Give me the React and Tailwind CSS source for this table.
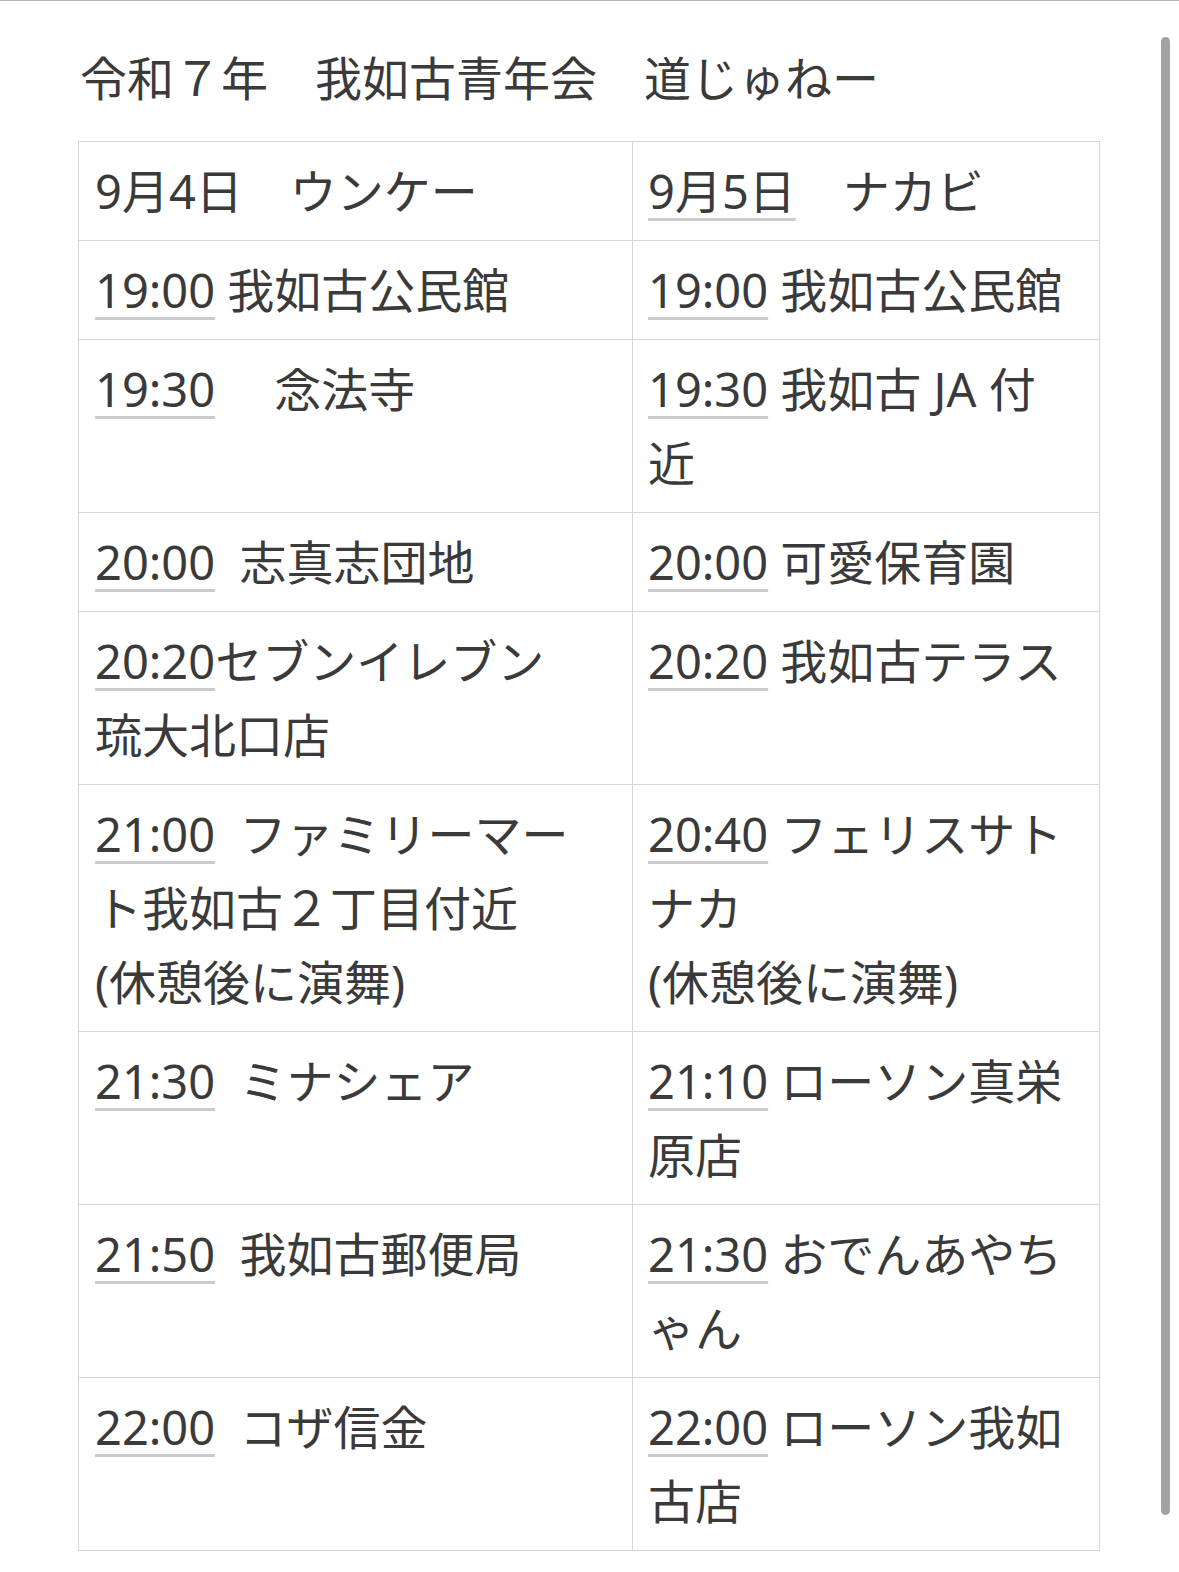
import React from "react";

const rows = [
  [
    { time: "19:00", lines: [" 我如古公民館"] },
    { time: "19:00", lines: [" 我如古公民館"] },
  ],
  [
    { time: "19:30", lines: ["　 念法寺"] },
    { time: "19:30", lines: [" 我如古 JA 付", "近"] },
  ],
  [
    { time: "20:00", lines: ["  志真志団地"] },
    { time: "20:00", lines: [" 可愛保育園"] },
  ],
  [
    { time: "20:20", lines: ["セブンイレブン", "琉大北口店"] },
    { time: "20:20", lines: [" 我如古テラス"] },
  ],
  [
    { time: "21:00", lines: ["  ファミリーマー", "ト我如古２丁目付近", "(休憩後に演舞)"] },
    { time: "20:40", lines: [" フェリスサト", "ナカ", "(休憩後に演舞)"] },
  ],
  [
    { time: "21:30", lines: ["  ミナシェア"] },
    { time: "21:10", lines: [" ローソン真栄", "原店"] },
  ],
  [
    { time: "21:50", lines: ["  我如古郵便局"] },
    { time: "21:30", lines: [" おでんあやち", "ゃん"] },
  ],
  [
    { time: "22:00", lines: ["  コザ信金"] },
    { time: "22:00", lines: [" ローソン我如", "古店"] },
  ],
];

const Linked = ({ children }) => (
  <span className="underline decoration-[#cccccc] decoration-[3px] underline-offset-[9px]">
    {children}
  </span>
);

const Cell = ({ cell, left }) => (
  <td
    className={`border border-[#d6d6d6] align-top pt-[12px] pb-[12px] whitespace-pre ${
      left ? "w-[554px] pl-[16px] pr-[8px]" : "w-[467px] pl-[15px] pr-[8px]"
    }`}
  >
    <Linked>{cell.time}</Linked>
    {cell.lines.map((line, i) => (
      <React.Fragment key={i}>
        {i > 0 && <br />}
        {line}
      </React.Fragment>
    ))}
  </td>
);

const App = () => {
  return (
    <div
      className="w-[1179px] min-h-[1572px] bg-white text-[#3a3a3a] text-[47px] leading-[74px] border-t border-[#b5b5b5] relative overflow-hidden"
      style={{ fontFamily: '"Noto Sans", "Noto Sans CJK JP", sans-serif' }}
    >
      <div className="pl-[80px] pt-[40px]">
        <p className="whitespace-pre">令和７年　我如古青年会　道じゅねー</p>
      </div>

      <div className="pl-[78px] mt-[26px]">
        <table className="border-collapse border border-[#d6d6d6]">
          <tbody>
            <tr>
              <td className="border border-[#d6d6d6] align-top pt-[12px] pb-[12px] pl-[16px] pr-[8px] w-[554px] whitespace-pre">
                9月4日　ウンケー
              </td>
              <td className="border border-[#d6d6d6] align-top pt-[12px] pb-[12px] pl-[15px] pr-[8px] w-[467px] whitespace-pre">
                <Linked>9月5日</Linked>　ナカビ
              </td>
            </tr>
            {rows.map((r, i) => (
              <tr key={i}>
                <Cell cell={r[0]} left />
                <Cell cell={r[1]} />
              </tr>
            ))}
          </tbody>
        </table>
      </div>

      {/* scrollbar */}
      <div className="absolute left-[1161px] top-[36px] w-[9px] h-[1478px] rounded-full bg-[#a3a3a3]" />
    </div>
  );
};

export default App;
